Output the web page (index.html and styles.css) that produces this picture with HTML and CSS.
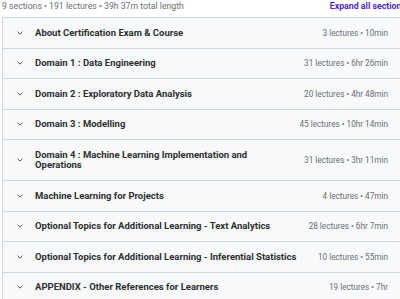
FILE: index.html
```html
<!DOCTYPE html>
<html lang="en">
<head>
  <meta charset="UTF-8">
  <meta name="viewport" content="width=device-width, initial-scale=1.0">
  <title>Course content</title>
  <link rel="stylesheet" href="styles.css">
</head>
<body>
  <div class="curriculum">
    <div class="curriculum-header">
      <span class="summary">9 sections • 191 lectures • 39h 37m total length</span>
      <span class="expand-all">Expand all sections</span>
    </div>

    <div class="sections">
      <div class="section">
        <svg class="chevron" viewBox="0 0 6 4"><polyline points="0.6,0.8 3,3.1 5.4,0.8"/></svg>
        <span class="section-title">About Certification Exam &amp; Course</span>
        <span class="section-meta">3 lectures • 10min</span>
      </div>
      <div class="section">
        <svg class="chevron" viewBox="0 0 6 4"><polyline points="0.6,0.8 3,3.1 5.4,0.8"/></svg>
        <span class="section-title">Domain 1 : Data Engineering</span>
        <span class="section-meta">31 lectures • 6hr 26min</span>
      </div>
      <div class="section">
        <svg class="chevron" viewBox="0 0 6 4"><polyline points="0.6,0.8 3,3.1 5.4,0.8"/></svg>
        <span class="section-title">Domain 2 : Exploratory Data Analysis</span>
        <span class="section-meta">20 lectures • 4hr 48min</span>
      </div>
      <div class="section">
        <svg class="chevron" viewBox="0 0 6 4"><polyline points="0.6,0.8 3,3.1 5.4,0.8"/></svg>
        <span class="section-title">Domain 3 : Modelling</span>
        <span class="section-meta">45 lectures • 10hr 14min</span>
      </div>
      <div class="section">
        <svg class="chevron" viewBox="0 0 6 4"><polyline points="0.6,0.8 3,3.1 5.4,0.8"/></svg>
        <span class="section-title">Domain 4 : Machine Learning Implementation and Operations</span>
        <span class="section-meta">31 lectures • 3hr 11min</span>
      </div>
      <div class="section">
        <svg class="chevron" viewBox="0 0 6 4"><polyline points="0.6,0.8 3,3.1 5.4,0.8"/></svg>
        <span class="section-title">Machine Learning for Projects</span>
        <span class="section-meta">4 lectures • 47min</span>
      </div>
      <div class="section">
        <svg class="chevron" viewBox="0 0 6 4"><polyline points="0.6,0.8 3,3.1 5.4,0.8"/></svg>
        <span class="section-title">Optional Topics for Additional Learning - Text Analytics</span>
        <span class="section-meta">28 lectures • 6hr 7min</span>
      </div>
      <div class="section">
        <svg class="chevron" viewBox="0 0 6 4"><polyline points="0.6,0.8 3,3.1 5.4,0.8"/></svg>
        <span class="section-title">Optional Topics for Additional Learning - Inferential Statistics</span>
        <span class="section-meta">10 lectures • 55min</span>
      </div>
      <div class="section">
        <svg class="chevron" viewBox="0 0 6 4"><polyline points="0.6,0.8 3,3.1 5.4,0.8"/></svg>
        <span class="section-title">APPENDIX - Other References for Learners</span>
        <span class="section-meta">19 lectures • 7hr</span>
      </div>
    </div>
  </div>
</body>
</html>
```

FILE: styles.css
```css
body {
  margin: 0;
  overflow: hidden;
  background: #fff;
  font-family: Roboto, "Noto Sans", sans-serif;
  color: #2d2f31;
}
.curriculum {
  width: 404px;
  margin-left: 2px;
}
.curriculum-header {
  display: flex;
  justify-content: space-between;
  height: 17px;
  line-height: 12px;
}
.summary {
  font-size: 8.7px;
  color: #6a6f73;
}
.expand-all {
  color: #5624d0;
  font-size: 8.8px;
  font-weight: 700;
  white-space: nowrap;
}
.sections {
  border: 1px solid #d1d7dc;
  border-bottom: none;
}
.section {
  display: flex;
  align-items: center;
  padding: 9.5px 17px 9.5px 14px;
  background: #f7f9fa;
  border-bottom: 1px solid #d1d7dc;
}
.chevron {
  width: 6px;
  height: 4px;
  flex-shrink: 0;
  margin-right: 12px;
  fill: none;
  stroke: #3e4143;
  stroke-width: 0.9;
}
.section-title {
  flex: 1;
  font-size: 9.5px;
  line-height: 10.5px;
  font-weight: 700;
}
.section-meta {
  flex-shrink: 0;
  margin-left: 16px;
  font-size: 8.2px;
  line-height: 10.5px;
  color: #6a6f73;
}
```
